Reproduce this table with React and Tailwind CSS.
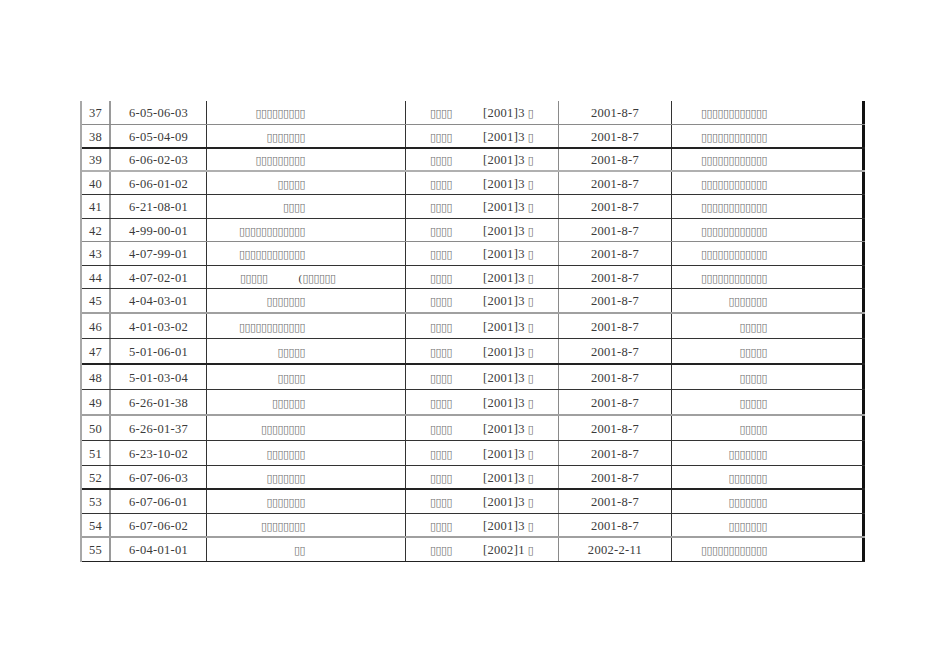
import React from "react";

const B = (n) => "▯".repeat(n);

const rows = [
  { n: 37, code: "6-05-06-03", a: 9, d: "2001-8-7", doc: "[2001]3", b: 12, h: "h-[24px]", line: "border-b border-[#8a8a8a]" },
  { n: 38, code: "6-05-04-09", a: 7, d: "2001-8-7", doc: "[2001]3", b: 12, h: "h-[24px]", line: "border-b-2 border-[#222]" },
  { n: 39, code: "6-06-02-03", a: 9, d: "2001-8-7", doc: "[2001]3", b: 12, h: "h-[23px]", line: "border-b-2 border-[#b0b0b0]" },
  { n: 40, code: "6-06-01-02", a: 5, d: "2001-8-7", doc: "[2001]3", b: 12, h: "h-[23px]", line: "border-b border-[#333]" },
  { n: 41, code: "6-21-08-01", a: 4, d: "2001-8-7", doc: "[2001]3", b: 12, h: "h-[24px]", line: "border-b border-[#333]" },
  { n: 42, code: "4-99-00-01", a: 12, d: "2001-8-7", doc: "[2001]3", b: 12, h: "h-[23px]", line: "border-b border-[#8a8a8a]" },
  { n: 43, code: "4-07-99-01", a: 12, d: "2001-8-7", doc: "[2001]3", b: 12, h: "h-[24px]", line: "border-b border-[#333]" },
  { n: 44, code: "4-07-02-01", a: -1, d: "2001-8-7", doc: "[2001]3", b: 12, h: "h-[23px]", line: "border-b border-[#333]" },
  { n: 45, code: "4-04-03-01", a: 7, d: "2001-8-7", doc: "[2001]3", b: 7, h: "h-[25px]", line: "border-b-2 border-[#a0a0a0]" },
  { n: 46, code: "4-01-03-02", a: 12, d: "2001-8-7", doc: "[2001]3", b: 5, h: "h-[25px]", line: "border-b border-[#333]" },
  { n: 47, code: "5-01-06-01", a: 5, d: "2001-8-7", doc: "[2001]3", b: 5, h: "h-[26px]", line: "border-b-2 border-[#222]" },
  { n: 48, code: "5-01-03-04", a: 5, d: "2001-8-7", doc: "[2001]3", b: 5, h: "h-[25px]", line: "border-b border-[#333]" },
  { n: 49, code: "6-26-01-38", a: 6, d: "2001-8-7", doc: "[2001]3", b: 5, h: "h-[26px]", line: "border-b-2 border-[#a0a0a0]" },
  { n: 50, code: "6-26-01-37", a: 8, d: "2001-8-7", doc: "[2001]3", b: 5, h: "h-[25px]", line: "border-b border-[#333]" },
  { n: 51, code: "6-23-10-02", a: 7, d: "2001-8-7", doc: "[2001]3", b: 7, h: "h-[25px]", line: "border-b border-[#333]" },
  { n: 52, code: "6-07-06-03", a: 7, d: "2001-8-7", doc: "[2001]3", b: 7, h: "h-[24px]", line: "border-b-2 border-[#222]" },
  { n: 53, code: "6-07-06-01", a: 7, d: "2001-8-7", doc: "[2001]3", b: 7, h: "h-[24px]", line: "border-b border-[#333]" },
  { n: 54, code: "6-07-06-02", a: 8, d: "2001-8-7", doc: "[2001]3", b: 7, h: "h-[24px]", line: "border-b-2 border-[#a0a0a0]" },
  { n: 55, code: "6-04-01-01", a: 2, d: "2002-2-11", doc: "[2002]1", b: 12, h: "h-[24px]", line: "border-b border-[#222]" },
];

const box = "font-['DejaVu_Sans',sans-serif] text-[11px] tracking-[-0.55px] text-[#707070] leading-none";
const txt = "font-['Liberation_Serif',serif] text-[12.5px] tracking-[0.3px] text-[#3a3a3a] leading-none";

export default function App() {
  return (
    <div className="w-[950px] h-[672px] bg-white overflow-hidden">
      <div className="pt-[101px] pl-[80px]">
        <div className="w-[785px] border-l-2 border-[#a8a8a8]">
          {rows.map((r) => (
            <div key={r.n} className={`grid grid-cols-[29px_96px_199px_153px_113px_193px] ${r.h} ${r.line}`}>
              <div className="flex items-center justify-center pt-[2px] border-r-2 border-[#9a9a9a]">
                <span className={txt}>{r.n}</span>
              </div>
              <div className="flex items-center justify-center pt-[2px] border-r border-[#333]">
                <span className={txt}>{r.code}</span>
              </div>
              {r.a === -1 ? (
                <div className="flex items-center pl-[33px] pt-[2px] border-r border-[#333]">
                  <span className={txt}>
                    <span className={box}>{B(5)}</span>
                    <span className="inline-block w-[31px]" />
                    <span className="text-[11px]">(</span>
                    <span className={box}>{B(6)}</span>
                  </span>
                </div>
              ) : (
                <div className="flex items-center justify-end pr-[100px] pt-[2px] border-r border-[#333]">
                  <span className={box}>{B(r.a)}</span>
                </div>
              )}
              <div className="flex items-center pl-[24px] pt-[2px] border-r border-[#8a8a8a]">
                <span className={txt}>
                  <span className={`${box} inline-block w-[53px]`}>{B(4)}</span>
                  {r.doc}
                  <span className={`${box} ml-[3px]`}>{B(1)}</span>
                </span>
              </div>
              <div className="flex items-center justify-center pt-[2px] border-r border-[#333]">
                <span className={txt}>{r.d}</span>
              </div>
              <div className="flex items-center justify-end pr-[95px] pt-[2px] border-r-[3px] border-[#111]">
                <span className={box}>{B(r.b)}</span>
              </div>
            </div>
          ))}
        </div>
      </div>
    </div>
  );
}
